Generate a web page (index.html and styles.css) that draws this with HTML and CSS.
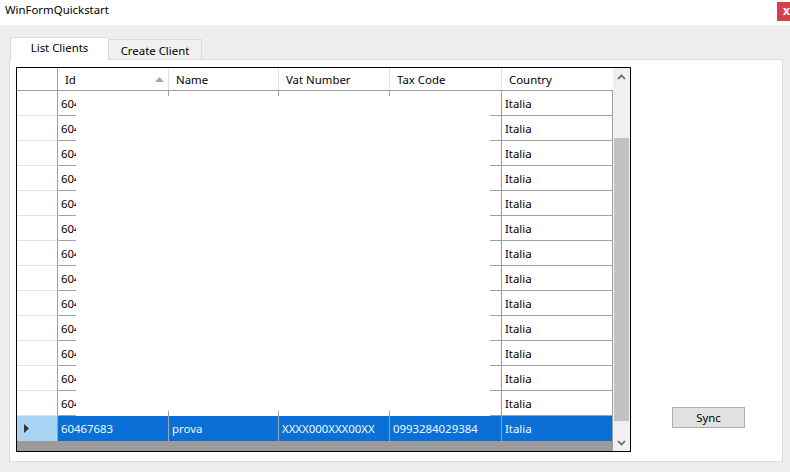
FILE: index.html
```html
<!DOCTYPE html>
<html>
<head>
<meta charset="utf-8">
<link rel="stylesheet" href="styles.css">
</head>
<body>
<div class="window">
  <div class="titlebar">
    <div class="title">WinFormQuickstart</div>
    <div class="close">x</div>
  </div>
  <div class="content">
    <div class="tabstrip">
      <div class="tab tab-active">List Clients</div>
      <div class="tab tab-inactive">Create Client</div>
    </div>
    <div class="panel">
      <div class="dgv">
        <div class="table">
          <div class="hrow">
            <div class="hcell c-rh"></div>
            <div class="hcell c-id tick">Id<svg class="sort" width="9" height="5" viewBox="0 0 9 5"><polygon points="0,5 4.5,0 9,5" fill="#a6a6a6"/></svg></div>
            <div class="hcell c-name tick">Name</div>
            <div class="hcell c-vat tick">Vat Number</div>
            <div class="hcell c-tax">Tax Code</div>
            <div class="hcell c-country">Country</div>
          </div>
          <div class="row"><div class="rh"></div><div class="idclip"><span>60467683</span></div><div class="blank"></div><div class="seg"></div><div class="country">Italia</div></div>
          <div class="row"><div class="rh"></div><div class="idclip"><span>60467683</span></div><div class="blank"></div><div class="seg"></div><div class="country">Italia</div></div>
          <div class="row"><div class="rh"></div><div class="idclip"><span>60467683</span></div><div class="blank"></div><div class="seg"></div><div class="country">Italia</div></div>
          <div class="row"><div class="rh"></div><div class="idclip"><span>60467683</span></div><div class="blank"></div><div class="seg"></div><div class="country">Italia</div></div>
          <div class="row"><div class="rh"></div><div class="idclip"><span>60467683</span></div><div class="blank"></div><div class="seg"></div><div class="country">Italia</div></div>
          <div class="row"><div class="rh"></div><div class="idclip"><span>60467683</span></div><div class="blank"></div><div class="seg"></div><div class="country">Italia</div></div>
          <div class="row"><div class="rh"></div><div class="idclip"><span>60467683</span></div><div class="blank"></div><div class="seg"></div><div class="country">Italia</div></div>
          <div class="row"><div class="rh"></div><div class="idclip"><span>60467683</span></div><div class="blank"></div><div class="seg"></div><div class="country">Italia</div></div>
          <div class="row"><div class="rh"></div><div class="idclip"><span>60467683</span></div><div class="blank"></div><div class="seg"></div><div class="country">Italia</div></div>
          <div class="row"><div class="rh"></div><div class="idclip"><span>60467683</span></div><div class="blank"></div><div class="seg"></div><div class="country">Italia</div></div>
          <div class="row"><div class="rh"></div><div class="idclip"><span>60467683</span></div><div class="blank"></div><div class="seg"></div><div class="country">Italia</div></div>
          <div class="row"><div class="rh"></div><div class="idclip"><span>60467683</span></div><div class="blank"></div><div class="seg"></div><div class="country">Italia</div></div>
          <div class="row"><div class="rh"></div><div class="idclip"><span>60467683</span></div><div class="blank"></div><div class="seg"></div><div class="country">Italia</div></div>
          <div class="srow">
            <div class="scell c-rh srh"><svg width="5" height="9" viewBox="0 0 5 9"><polygon points="0,0 5,4.5 0,9" fill="#333"/></svg></div>
            <div class="scell c-id stick">60467683</div>
            <div class="scell c-name stick">prova</div>
            <div class="scell c-vat stick">XXXX000XXX00XX</div>
            <div class="scell c-tax">0993284029384</div>
            <div class="scell c-country">Italia</div>
          </div>
          <div class="empty"></div>
        </div>
        <div class="vscroll">
          <div class="sbtn"><svg width="9" height="6" viewBox="0 0 9 6"><polyline points="1,5 4.5,1.5 8,5" fill="none" stroke="#606060" stroke-width="1.6"/></svg></div>
          <div class="track"><div class="thumb"></div></div>
          <div class="sbtn"><svg width="9" height="6" viewBox="0 0 9 6"><polyline points="1,1 4.5,4.5 8,1" fill="none" stroke="#606060" stroke-width="1.6"/></svg></div>
        </div>
      </div>
      <div class="side">
        <div class="btn">Sync</div>
      </div>
    </div>
  </div>
</div>
</body>
</html>
```

FILE: styles.css
```css
html, body {
  margin: 0;
  padding: 0;
}
body {
  background: #eeeeee;
  font-family: "Noto Sans", "Open Sans", sans-serif;
  font-size: 11.4px;
  color: #000;
}
.window {
  width: 790px;
  height: 472px;
  overflow: hidden;
}
.titlebar {
  height: 25px;
  background: #ffffff;
  display: flex;
  justify-content: space-between;
  align-items: flex-start;
}
.title {
  padding: 2px 0 0 5px;
  line-height: 16px;
}
.close {
  margin-top: 2px;
  width: 13px;
  height: 19px;
  background: #d6404a;
  color: #fff;
  font-weight: bold;
  font-size: 12px;
  line-height: 17px;
  padding-left: 6px;
  box-sizing: border-box;
}
.content {
  padding: 12px 0 0 9px;
}
.tabstrip {
  display: flex;
  align-items: flex-end;
  height: 22px;
  padding-left: 1px;
}
.tab {
  box-sizing: border-box;
  border: 1px solid #dcdcdc;
  border-bottom: none;
  text-align: center;
  white-space: nowrap;
}
.tab-active {
  width: 99px;
  height: 23px;
  margin-bottom: -1px;
  background: #ffffff;
  position: relative;
  z-index: 1;
  line-height: 20px;
}
.tab-inactive {
  width: 94px;
  height: 20px;
  margin-left: -1px;
  background: #f0f0f0;
  line-height: 21px;
}
.panel {
  box-sizing: border-box;
  width: 774px;
  height: 403px;
  background: #ffffff;
  border: 1px solid #dcdcdc;
  padding: 7px 0 0 6px;
  display: flex;
  align-items: flex-start;
}
.dgv {
  width: 615px;
  height: 385px;
  box-sizing: border-box;
  border: 1px solid #000;
  display: flex;
  background: #ffffff;
}
.table {
  width: 596px;
  display: flex;
  flex-direction: column;
}
.hrow {
  display: flex;
  height: 23px;
  box-sizing: border-box;
  border-bottom: 1px solid #a0a0a0;
}
.hcell {
  box-sizing: border-box;
  height: 22px;
  line-height: 21px;
  padding: 1px 0 0 7px;
  border-right: 1px solid #e3e3e3;
  white-space: nowrap;
  position: relative;
}
.hcell.c-rh {
  border-right: 1px solid #a0a0a0;
}
.c-rh { width: 41px; }
.c-id { width: 111px; }
.c-name { width: 110px; }
.c-vat { width: 111px; }
.c-tax { width: 112px; }
.c-country { width: 111px; }
.hcell.c-country { border-right: none; }
.sort {
  position: absolute;
  right: 4px;
  top: 9px;
}
.tick::after {
  content: "";
  position: absolute;
  right: -1px;
  bottom: -6px;
  width: 1px;
  height: 5px;
  background: #a0a0a0;
}
.row {
  display: flex;
  height: 25px;
}
.rh {
  box-sizing: border-box;
  width: 41px;
  border-right: 1px solid #a0a0a0;
  border-bottom: 1px solid #e3e3e3;
}
.idclip {
  box-sizing: border-box;
  width: 18px;
  overflow: hidden;
  white-space: nowrap;
  border-bottom: 1px solid #a0a0a0;
  padding: 1px 0 0 3px;
  line-height: 23px;
}
.idclip span {
  display: block;
  width: 60px;
}
.blank {
  width: 414px;
}
.seg {
  box-sizing: border-box;
  width: 11px;
  border-bottom: 1px solid #a0a0a0;
}
.country {
  box-sizing: border-box;
  width: 112px;
  border-left: 1px solid #a0a0a0;
  border-right: 1px solid #a0a0a0;
  border-bottom: 1px solid #a0a0a0;
  padding: 1px 0 0 3px;
  line-height: 23px;
}
.srow {
  display: flex;
  height: 25px;
  background: #0a6fd6;
  color: #f4f8ff;
}
.scell {
  box-sizing: border-box;
  height: 25px;
  line-height: 25px;
  padding-left: 3px;
  border-right: 1px solid #9aa6b4;
  white-space: nowrap;
  position: relative;
}
.scell.c-country { border-right: 1px solid #a0a0a0; }
.srh {
  background: #a9d4f4;
  border-right: 1px solid #a0a0a0;
  padding-left: 7px;
  display: flex;
  align-items: center;
}
.stick::before {
  content: "";
  position: absolute;
  right: -1px;
  top: -5px;
  width: 1px;
  height: 5px;
  background: #a0a0a0;
}
.empty {
  height: 10px;
  background: #9b9b9b;
}
.vscroll {
  width: 17px;
  background: #f0f0f0;
  display: flex;
  flex-direction: column;
}
.sbtn {
  height: 17px;
  display: flex;
  align-items: center;
  justify-content: center;
}
.track {
  flex: 1;
  display: flex;
  flex-direction: column;
  padding: 53px 1px 13px 1px;
}
.thumb {
  flex: 1;
  background: #c2c2c2;
}
.side {
  padding: 340px 0 0 41px;
}
.btn {
  box-sizing: border-box;
  width: 73px;
  height: 21px;
  background: #e1e1e1;
  border: 1px solid #adadad;
  text-align: center;
  line-height: 19px;
}
```
